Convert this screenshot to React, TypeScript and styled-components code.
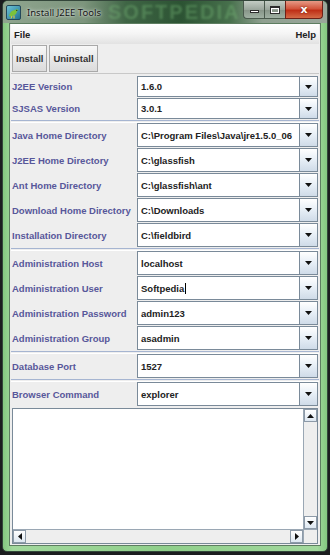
import styled, { createGlobalStyle } from "styled-components";

const GlobalStyle = createGlobalStyle`
  html, body {
    margin: 0;
    padding: 0;
    background: #1b1d1f;
  }
  * {
    box-sizing: border-box;
  }
`;

type Field = { label: string; value: string; caret?: boolean };

const groups: { compact?: boolean; rows: Field[] }[] = [
  {
    compact: true,
    rows: [
      { label: "J2EE Version", value: "1.6.0" },
      { label: "SJSAS Version", value: "3.0.1" },
    ],
  },
  {
    rows: [
      { label: "Java Home Directory", value: "C:\\Program Files\\Java\\jre1.5.0_06" },
      { label: "J2EE Home Directory", value: "C:\\glassfish" },
      { label: "Ant Home Directory", value: "C:\\glassfish\\ant" },
      { label: "Download Home Directory", value: "C:\\Downloads" },
      { label: "Installation Directory", value: "C:\\fieldbird" },
    ],
  },
  {
    rows: [
      { label: "Administration Host", value: "localhost" },
      { label: "Administration User", value: "Softpedia", caret: true },
      { label: "Administration Password", value: "admin123" },
      { label: "Administration Group", value: "asadmin" },
    ],
  },
  { rows: [{ label: "Database Port", value: "1527" }] },
  { rows: [{ label: "Browser Command", value: "explorer" }] },
];

// 작은 삼각형 화살표
function Arrow({ dir = "down" }: { dir?: "down" | "up" | "left" | "right" }) {
  const pts = {
    down: "0,0 7,0 3.5,4",
    up: "0,4 7,4 3.5,0",
    left: "4,0 4,7 0,3.5",
    right: "0,0 0,7 4,3.5",
  }[dir];
  const vertical = dir === "down" || dir === "up";
  return (
    <svg width={vertical ? 7 : 4} height={vertical ? 4 : 7}>
      <polygon points={pts} fill="#111" />
    </svg>
  );
}

function AppIcon() {
  return (
    <svg width="15" height="15" viewBox="0 0 15 15">
      <defs>
        <linearGradient id="ic" x1="0" y1="0" x2="1" y2="1">
          <stop offset="0" stopColor="#6fc6d8" />
          <stop offset="1" stopColor="#1f6f8e" />
        </linearGradient>
      </defs>
      <rect x="0.5" y="0.5" width="14" height="14" rx="1.5" fill="url(#ic)" stroke="#24485a" />
      <path d="M3 11 C4 7 6 5 9 5 C10 4 11.5 4 12.5 5 L11 6 C11 9 8 11 4 11.5 Z" fill="#7cc23a" />
      <path d="M6 11 L5 13.5 M8 10.5 L8 13.5" stroke="#f3d02a" strokeWidth="1" />
      <circle cx="10.8" cy="5.3" r="0.6" fill="#111" />
    </svg>
  );
}

export default function App() {
  return (
    <>
      <GlobalStyle />
      <Desktop>
        <Window>
          <TitleBar>
            <AppIcon />
            <TitleText>Install J2EE Tools</TitleText>
            <Watermark>SOFTPEDIA</Watermark>
            <CaptionButtons>
              <CaptionButton>
                <MinGlyph />
              </CaptionButton>
              <CaptionButton>
                <MaxGlyph />
              </CaptionButton>
              <CloseButton>x</CloseButton>
            </CaptionButtons>
          </TitleBar>

          <Client>
            <MenuBar>
              <MenuItem>File</MenuItem>
              <MenuItem>Help</MenuItem>
            </MenuBar>

            <ToolBar>
              <ToolButton>Install</ToolButton>
              <ToolButton>Uninstall</ToolButton>
            </ToolBar>

            <Form>
              {groups.map((group, gi) => (
                <Group key={gi}>
                  {gi > 0 && <Separator />}
                  {group.rows.map((row) => (
                    <Row key={row.label} $compact={group.compact}>
                      <Label>{row.label}</Label>
                      <Combo>
                        <ComboText>
                          {row.value}
                          {row.caret && <Caret />}
                        </ComboText>
                        <ComboButton>
                          <Arrow />
                        </ComboButton>
                      </Combo>
                    </Row>
                  ))}
                </Group>
              ))}
            </Form>

            <ScrollPane>
              <PaneBody>
                <TextArea />
                <VScroll>
                  <ScrollButton>
                    <Arrow dir="up" />
                  </ScrollButton>
                  <Track />
                  <ScrollButton>
                    <Arrow dir="down" />
                  </ScrollButton>
                </VScroll>
              </PaneBody>
              <PaneFoot>
                <HScroll>
                  <ScrollButton>
                    <Arrow dir="left" />
                  </ScrollButton>
                  <Track />
                  <ScrollButton>
                    <Arrow dir="right" />
                  </ScrollButton>
                </HScroll>
                <Corner />
              </PaneFoot>
            </ScrollPane>
          </Client>
        </Window>
      </Desktop>
    </>
  );
}

const Desktop = styled.div`
  width: 330px;
  height: 555px;
  padding: 0 2px 3px 2px;
  display: flex;
  background: #1b1d1f;
  font-family: "Liberation Sans", Arial, sans-serif;
`;

const Window = styled.div`
  flex: 1;
  display: flex;
  flex-direction: column;
  border: 1px solid #33463a;
  border-radius: 6px 6px 5px 5px;
  overflow: hidden;
  background: linear-gradient(90deg, #84c880 0%, #a2d89d 3%, #8fcf8a 50%, #a2d89d 97%, #84c880 100%);
`;

const TitleBar = styled.div`
  position: relative;
  height: 22px;
  flex-shrink: 0;
  display: flex;
  align-items: center;
  gap: 6px;
  padding: 0 0 0 3px;
  background: linear-gradient(
    90deg,
    #8fa58f 0%,
    #7d957d 25%,
    #3f6545 38%,
    #2c5333 55%,
    #47704c 70%,
    #8fa090 80%,
    #9aa79b 100%
  );
`;

const TitleText = styled.div`
  font-family: "Noto Sans", "Open Sans", sans-serif;
  font-size: 9.5px;
  color: #141414;
  text-shadow: 0 0 4px rgba(255, 255, 255, 0.8), 0 0 2px rgba(255, 255, 255, 0.7);
  z-index: 1;
`;

const Watermark = styled.div`
  position: absolute;
  left: 105px;
  top: 0;
  font-family: "Liberation Sans", sans-serif;
  font-weight: bold;
  font-size: 20px;
  letter-spacing: 2px;
  color: rgba(120, 185, 120, 0.4);
  filter: blur(1.3px);
`;

const CaptionButtons = styled.div`
  position: absolute;
  right: 4px;
  top: 0;
  display: flex;
  z-index: 2;
`;

const CaptionButton = styled.div`
  width: 21px;
  height: 18px;
  display: flex;
  align-items: center;
  justify-content: center;
  border: 1px solid #4a5a4d;
  border-top: none;
  border-right: none;
  background: linear-gradient(#c3ccc4, #9aa69c 50%, #869487 51%, #9fb0a2);
  &:first-child {
    border-radius: 0 0 0 4px;
  }
`;

const MinGlyph = styled.div`
  width: 9px;
  height: 3px;
  margin-top: 4px;
  background: #fff;
  border: 1px solid #2c2c2c;
`;

const MaxGlyph = styled.div`
  width: 10px;
  height: 8px;
  border: 1px solid #2c2c2c;
  border-top-width: 2px;
  box-shadow: inset 0 0 0 1px #fff;
  background: transparent;
`;

const CloseButton = styled.div`
  width: 38px;
  height: 18px;
  display: flex;
  align-items: center;
  justify-content: center;
  border: 1px solid #6d2118;
  border-top: none;
  border-radius: 0 0 4px 0;
  background: linear-gradient(#e69a86, #d2553c 45%, #bf2f17 55%, #d46a46);
  color: #fff;
  font-family: "DejaVu Sans", sans-serif;
  font-weight: bold;
  font-size: 11px;
  line-height: 1;
  text-shadow: 0 0 2px #5a1005;
`;

const Client = styled.div`
  flex: 1;
  min-height: 0;
  margin: 0 6px 5px 6px;
  display: flex;
  flex-direction: column;
  background: #eeeeee;
  border: 1px solid #5d7d60;
  padding: 0 1px 1px 1px;
`;

const MenuBar = styled.div`
  height: 20px;
  flex-shrink: 0;
  display: flex;
  justify-content: space-between;
  align-items: center;
  padding: 0 3px;
  background: linear-gradient(#ffffff, #f4f4f4 50%, #e2e2e2);
`;

const MenuItem = styled.div`
  font-weight: bold;
  font-size: 9.5px;
  color: #222;
`;

const ToolBar = styled.div`
  height: 30px;
  flex-shrink: 0;
  display: flex;
  align-items: center;
  gap: 2px;
  padding: 0 1px;
  border-bottom: 1px solid #c8c8c8;
`;

const ToolButton = styled.div`
  height: 27px;
  display: flex;
  align-items: center;
  padding: 0 3px;
  font-weight: bold;
  font-size: 9.5px;
  color: #333;
  border: 1px solid #a9a9a9;
  background: linear-gradient(#f8f8f8, #e6e6e6 60%, #dcdcdc);
`;

const Form = styled.div`
  flex-shrink: 0;
  display: flex;
  flex-direction: column;
  padding: 2px 1px 0 1px;
`;

const Group = styled.div`
  display: flex;
  flex-direction: column;
`;

const Separator = styled.div`
  height: 3px;
  margin: 0 -1px;
  border-top: 1px solid #a6b5d1;
  border-bottom: 1px solid #ffffff;
`;

const Row = styled.div<{ $compact?: boolean }>`
  height: ${({ $compact }) => ($compact ? "22px" : "25px")};
  display: flex;
  align-items: center;
  padding-bottom: 1px;
`;

const Label = styled.div`
  width: 125px;
  flex-shrink: 0;
  font-weight: bold;
  font-size: 9.5px;
  color: #57579a;
  white-space: nowrap;
`;

const Combo = styled.div`
  flex: 1;
  height: 100%;
  display: flex;
  border: 1px solid #7a8a99;
  background: #fff;
`;

const ComboText = styled.div`
  flex: 1;
  display: flex;
  align-items: center;
  padding-left: 3px;
  font-weight: bold;
  font-size: 9.5px;
  color: #222;
  white-space: nowrap;
  overflow: hidden;
  box-shadow: inset 0 0 0 1px #fff;
`;

const Caret = styled.span`
  display: inline-block;
  width: 1px;
  height: 11px;
  margin-left: 1px;
  background: #000;
`;

const ComboButton = styled.div`
  width: 18px;
  display: flex;
  align-items: center;
  justify-content: center;
  border-left: 1px solid #7a8a99;
  background: linear-gradient(#ffffff, #e6eef6 50%, #cfdbe8);
`;

const ScrollPane = styled.div`
  flex: 1;
  min-height: 0;
  margin: 1px 1px 0 1px;
  display: flex;
  flex-direction: column;
  border: 1px solid #7a8a99;
  background: #fff;
`;

const PaneBody = styled.div`
  flex: 1;
  min-height: 0;
  display: flex;
`;

const PaneFoot = styled.div`
  height: 14px;
  flex-shrink: 0;
  display: flex;
`;

const TextArea = styled.div`
  flex: 1;
  background: #fff;
`;

const VScroll = styled.div`
  width: 14px;
  display: flex;
  flex-direction: column;
  border-left: 1px solid #9aa7b4;
  background: #eeeeee;
`;

const HScroll = styled.div`
  flex: 1;
  display: flex;
  border-top: 1px solid #9aa7b4;
  background: #eeeeee;
`;

const ScrollButton = styled.div`
  width: 13px;
  height: 13px;
  flex-shrink: 0;
  display: flex;
  align-items: center;
  justify-content: center;
  border: 1px solid #8d9aa8;
  background: linear-gradient(#ffffff, #dde7f1);
`;

const Track = styled.div`
  flex: 1;
  background: #eeeeee;
`;

const Corner = styled.div`
  width: 14px;
  border-top: 1px solid #9aa7b4;
  border-left: 1px solid #9aa7b4;
  background: #eeeeee;
`;
